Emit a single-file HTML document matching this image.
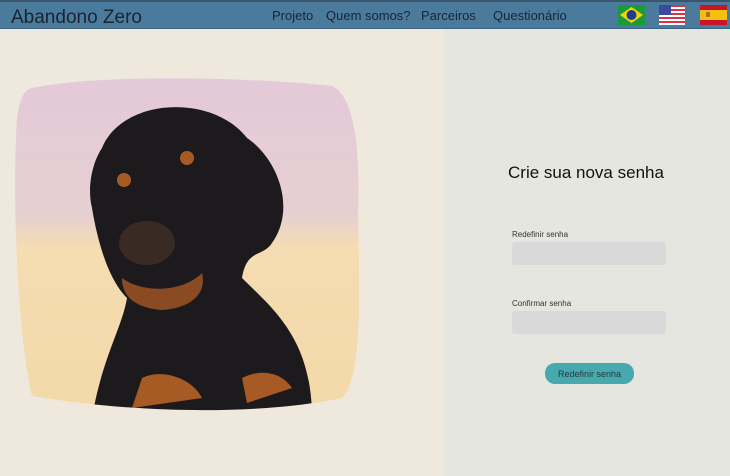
<!DOCTYPE html>
<html><head><meta charset="utf-8"><style>
*{margin:0;padding:0;box-sizing:border-box}
body{width:730px;height:476px;overflow:hidden;font-family:"Liberation Sans",sans-serif;background:#efe8dd;position:relative}
.hdr{position:absolute;left:0;top:0;width:730px;height:29px;background:#4a7b9d;border-top:2px solid #3a5568;border-bottom:1px solid #3d6480}
.logo{position:absolute;left:11px;top:5px;font-size:19px;color:#1b2430}
.nav{position:absolute;top:6px;font-size:13px;color:#1b2430}
.right{position:absolute;left:444px;top:29px;width:286px;height:447px;background:#e6e6e1}
h1{position:absolute;left:508px;top:163px;font-size:17px;font-weight:normal;color:#111}
.lbl{position:absolute;left:512px;font-size:8px;color:#333}
.in{position:absolute;left:512px;width:154px;height:23px;background:#d9d9d9;border-radius:3px}
.btn{position:absolute;left:545px;top:363px;width:89px;height:21px;background:#47a9ad;border-radius:10px;font-size:9px;color:#1f3b3d;text-align:center;line-height:22px}
</style></head><body>
<div class="hdr">
<div class="logo">Abandono Zero</div>
<div class="nav" style="left:272px">Projeto</div>
<div class="nav" style="left:326px">Quem somos?</div>
<div class="nav" style="left:421px">Parceiros</div>
<div class="nav" style="left:493px">Questionário</div>
<svg style="position:absolute;left:618px;top:3px" width="27" height="20"><rect width="27" height="20" fill="#1a9a3a"/><polygon points="13.5,2 25,10 13.5,18 2,10" fill="#f5d20a"/><circle cx="13.5" cy="10" r="5" fill="#1f3d8a"/></svg>
<svg style="position:absolute;left:659px;top:3px" width="26" height="20"><rect width="26" height="20" fill="#fff"/><g fill="#d6344a"><rect y="0" width="26" height="2"/><rect y="4" width="26" height="2"/><rect y="8" width="26" height="2"/><rect y="12" width="26" height="2"/><rect y="16" width="26" height="2"/></g><rect width="12" height="10" fill="#3b4a9a"/></svg>
<svg style="position:absolute;left:700px;top:3px" width="27" height="20"><rect width="27" height="20" fill="#c8142a"/><rect y="5" width="27" height="10" fill="#f3c10d"/><rect x="6" y="7" width="4" height="5" fill="#b8662a"/></svg>
</div>
<svg style="position:absolute;left:12px;top:78px" width="350" height="340" viewBox="0 0 350 340">
<defs><linearGradient id="bg" x1="0" y1="0" x2="0" y2="1"><stop offset="0" stop-color="#e4c9d8"/><stop offset="0.4" stop-color="#e6cfd2"/><stop offset="0.5" stop-color="#f5dcb2"/><stop offset="1" stop-color="#f3d9a8"/></linearGradient>
<clipPath id="c"><path d="M20,10 C90,-5 250,0 320,8 C345,20 348,80 346,140 C348,220 350,300 330,320 C260,335 140,338 20,318 C5,250 0,120 5,40 C8,20 12,12 20,10Z"/></clipPath></defs>
<g clip-path="url(#c)"><rect width="350" height="340" fill="url(#bg)"/>
<path d="M90,70 C110,20 200,15 235,60 C265,80 285,130 260,165 C250,180 235,170 230,200 C260,230 300,260 300,340 L80,340 C90,280 110,250 115,220 C95,200 85,160 80,130 C75,110 80,85 90,70Z" fill="#1c1a1d"/>
<ellipse cx="135" cy="165" rx="28" ry="22" fill="#3a2a24"/>
<path d="M110,200 C130,215 170,215 190,195 C195,215 180,230 150,232 C125,230 110,220 110,200Z" fill="#8a4a22"/>
<circle cx="112" cy="102" r="7" fill="#a85a25"/><circle cx="175" cy="80" r="7" fill="#a85a25"/>
<path d="M130,300 C150,290 180,300 190,320 L120,330Z" fill="#a85a25"/><path d="M230,300 C250,290 270,295 280,310 L235,325Z" fill="#a85a25"/>
</g></svg>
<div class="right"></div>
<h1>Crie sua nova senha</h1>
<div class="lbl" style="top:230px">Redefinir senha</div>
<div class="in" style="top:242px"></div>
<div class="lbl" style="top:299px">Confirmar senha</div>
<div class="in" style="top:311px"></div>
<div class="btn">Redefinir senha</div>
</body></html>
